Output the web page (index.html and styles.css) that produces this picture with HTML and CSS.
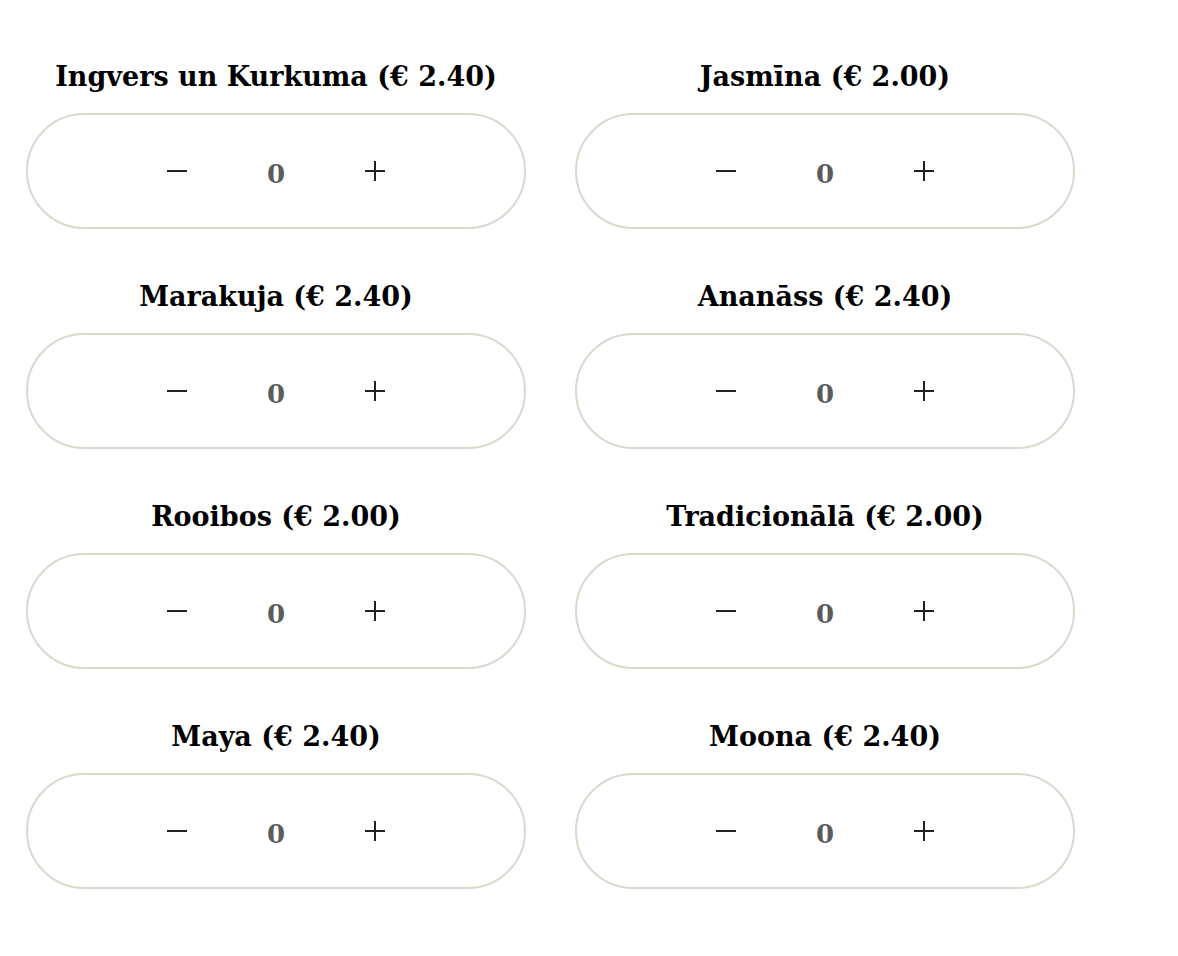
FILE: index.html
```html
<!DOCTYPE html>
<html lang="lv">
<head>
<meta charset="utf-8">
<title>Tējas</title>
<link rel="stylesheet" href="styles.css">
</head>
<body>
<div class="grid">
  <div class="item">
    <h3 class="title">Ingvers un Kurkuma (€ 2.40)</h3>
    <div class="pill"><button class="btn" aria-label="−"><svg viewBox="0 0 22 22"><path d="M1 11H21"/></svg></button><span class="qty">0</span><button class="btn" aria-label="+"><svg viewBox="0 0 22 22"><path d="M1 11H21M11 1V21"/></svg></button></div>
  </div>
  <div class="item">
    <h3 class="title">Jasmīna (€ 2.00)</h3>
    <div class="pill"><button class="btn" aria-label="−"><svg viewBox="0 0 22 22"><path d="M1 11H21"/></svg></button><span class="qty">0</span><button class="btn" aria-label="+"><svg viewBox="0 0 22 22"><path d="M1 11H21M11 1V21"/></svg></button></div>
  </div>
  <div class="item">
    <h3 class="title">Marakuja (€ 2.40)</h3>
    <div class="pill"><button class="btn" aria-label="−"><svg viewBox="0 0 22 22"><path d="M1 11H21"/></svg></button><span class="qty">0</span><button class="btn" aria-label="+"><svg viewBox="0 0 22 22"><path d="M1 11H21M11 1V21"/></svg></button></div>
  </div>
  <div class="item">
    <h3 class="title">Ananāss (€ 2.40)</h3>
    <div class="pill"><button class="btn" aria-label="−"><svg viewBox="0 0 22 22"><path d="M1 11H21"/></svg></button><span class="qty">0</span><button class="btn" aria-label="+"><svg viewBox="0 0 22 22"><path d="M1 11H21M11 1V21"/></svg></button></div>
  </div>
  <div class="item">
    <h3 class="title">Rooibos (€ 2.00)</h3>
    <div class="pill"><button class="btn" aria-label="−"><svg viewBox="0 0 22 22"><path d="M1 11H21"/></svg></button><span class="qty">0</span><button class="btn" aria-label="+"><svg viewBox="0 0 22 22"><path d="M1 11H21M11 1V21"/></svg></button></div>
  </div>
  <div class="item">
    <h3 class="title">Tradicionālā (€ 2.00)</h3>
    <div class="pill"><button class="btn" aria-label="−"><svg viewBox="0 0 22 22"><path d="M1 11H21"/></svg></button><span class="qty">0</span><button class="btn" aria-label="+"><svg viewBox="0 0 22 22"><path d="M1 11H21M11 1V21"/></svg></button></div>
  </div>
  <div class="item">
    <h3 class="title">Maya (€ 2.40)</h3>
    <div class="pill"><button class="btn" aria-label="−"><svg viewBox="0 0 22 22"><path d="M1 11H21"/></svg></button><span class="qty">0</span><button class="btn" aria-label="+"><svg viewBox="0 0 22 22"><path d="M1 11H21M11 1V21"/></svg></button></div>
  </div>
  <div class="item">
    <h3 class="title">Moona (€ 2.40)</h3>
    <div class="pill"><button class="btn" aria-label="−"><svg viewBox="0 0 22 22"><path d="M1 11H21"/></svg></button><span class="qty">0</span><button class="btn" aria-label="+"><svg viewBox="0 0 22 22"><path d="M1 11H21M11 1V21"/></svg></button></div>
  </div>
</div>
</body>
</html>
```
FILE: styles.css
```css
body {
  margin: 8px;
  background: #fff;
  font-family: "DejaVu Serif", "Liberation Serif", serif;
  color: #000;
}
.grid {
  display: grid;
  grid-template-columns: 500px 500px;
  column-gap: 49px;
  row-gap: 48px;
  padding: 49px 0 0 18px;
}
.item {
  display: flex;
  flex-direction: column;
}
.title {
  margin: 0 0 16px;
  height: 40px;
  line-height: 40px;
  font-size: 27px;
  font-weight: bold;
  text-align: center;
  color: #000;
  white-space: nowrap;
}
.pill {
  box-sizing: border-box;
  height: 116px;
  border: 2px solid #ddd8cd;
  border-radius: 58px;
  display: flex;
  align-items: center;
  justify-content: center;
  gap: 59px;
}
.btn {
  width: 40px;
  height: 40px;
  padding: 0;
  border: none;
  background: none;
  display: flex;
  align-items: center;
  justify-content: center;
  cursor: pointer;
}
.btn svg {
  width: 22px;
  height: 22px;
  fill: none;
  stroke: #222;
  stroke-width: 2;
}
.qty {
  width: 40px;
  text-align: center;
  font-size: 26px;
  font-weight: bold;
  line-height: 40px;
  padding-top: 6px;
  color: #5c5c5c;
}
```
